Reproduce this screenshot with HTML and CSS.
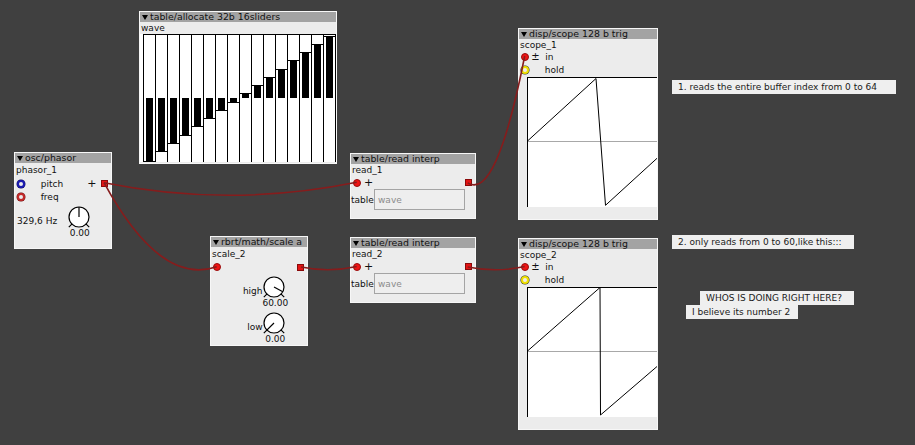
FILE: index.html
```html
<!DOCTYPE html>
<html>
<head>
<meta charset="utf-8">
<link rel="stylesheet" href="styles.css">
</head>
<body>
<div class="canvas">

  <div class="obj o-table">
    <div class="hdr"><span class="tri"></span>table/allocate 32b 16sliders</div>
    <div class="iname h12">wave</div>
    <svg class="sliders" width="196" height="128" viewBox="0 0 196 128">
      <rect x="0" y="0" width="196" height="128" fill="#fff"/>
      <g fill="#000">
        <rect x="6" y="64" width="7" height="63"/>
        <rect x="18" y="64" width="7" height="53"/>
        <rect x="30" y="64" width="7" height="45"/>
        <rect x="42" y="64" width="7" height="37"/>
        <rect x="54" y="64" width="7" height="28"/>
        <rect x="66" y="64" width="7" height="20"/>
        <rect x="78" y="64" width="7" height="12"/>
        <rect x="90" y="64" width="7" height="4"/>
        <rect x="102" y="59" width="7" height="5"/>
        <rect x="114" y="51" width="7" height="13"/>
        <rect x="126" y="43" width="7" height="21"/>
        <rect x="138" y="35" width="7" height="29"/>
        <rect x="150" y="26" width="7" height="38"/>
        <rect x="162" y="18" width="7" height="46"/>
        <rect x="174" y="10" width="7" height="54"/>
        <rect x="186" y="2" width="7" height="62"/>
      </g>
      <path stroke="#000" stroke-width="1" fill="none" d="M3 0.5H196 M3.5 0V128 M15.5 0V128 M27.5 0V128 M39.5 0V128 M51.5 0V128 M63.5 0V128 M75.5 0V128 M87.5 0V128 M99.5 0V128 M111.5 0V128 M123.5 0V128 M135.5 0V128 M147.5 0V128 M159.5 0V128 M171.5 0V128 M183.5 0V128 M195.5 0V128
        M3.5 127.5H15.5 M15.5 117.5H27.5 M27.5 109.5H39.5 M39.5 101.5H51.5 M51.5 92.5H63.5 M63.5 84.5H75.5 M75.5 76.5H87.5 M87.5 68.5H99.5 M99.5 59.5H111.5 M111.5 51.5H123.5 M123.5 43.5H135.5 M135.5 35.5H147.5 M147.5 26.5H159.5 M159.5 18.5H171.5 M171.5 10.5H183.5 M183.5 2.5H195.5"/>
    </svg>
  </div>

  <div class="obj o-phasor">
    <div class="hdr"><span class="tri"></span>osc/phasor</div>
    <div class="iname h14">phasor_1</div>
    <div class="row h13">
      <span class="ring ring-blue"></span><span class="plabel">pitch</span>
      <span class="fill"></span><span class="sign">+</span><span class="outlet"></span>
    </div>
    <div class="row h13">
      <span class="ring ring-red"></span><span class="plabel">freq</span>
    </div>
    <div class="krow kr-phasor">
      <span class="klabel kl-phasor">329,6 Hz</span>
      <div class="knob">
        <svg width="30" height="24" viewBox="0 0 30 24"><circle cx="15" cy="12" r="10" fill="#fff" stroke="#000" stroke-width="1.2"/><path d="M8.3 18.7L4.8 22.2M21.7 18.7L25.2 22.2M15 12V2" stroke="#000" stroke-width="1.2" fill="none"/></svg>
        <span class="kval">0.00</span>
      </div>
    </div>
  </div>

  <div class="obj o-scale">
    <div class="hdr"><span class="tri"></span>rbrt/math/scale a</div>
    <div class="iname h14">scale_2</div>
    <div class="row h12">
      <span class="inlet"></span><span class="fill"></span><span class="outlet"></span>
    </div>
    <div class="krow kr-high">
      <span class="klabel kl-scale">high</span>
      <div class="knob knob-tight">
        <svg width="30" height="24" viewBox="0 0 30 24"><circle cx="15" cy="12" r="10" fill="#fff" stroke="#000" stroke-width="1.2"/><path d="M8.3 18.7L4.8 22.2M21.7 18.7L25.2 22.2M15 12L23.8 16.7" stroke="#000" stroke-width="1.2" fill="none"/></svg>
        <span class="kval">60.00</span>
      </div>
    </div>
    <div class="krow kr-low">
      <span class="klabel kl-scale">low</span>
      <div class="knob knob-tight">
        <svg width="30" height="24" viewBox="0 0 30 24"><circle cx="15" cy="12" r="10" fill="#fff" stroke="#000" stroke-width="1.2"/><path d="M8.3 18.7L4.8 22.2M21.7 18.7L25.2 22.2M15 12L4.8 22.2" stroke="#000" stroke-width="1.2" fill="none"/></svg>
        <span class="kval">0.00</span>
      </div>
    </div>
  </div>

  <div class="obj o-read1">
    <div class="hdr"><span class="tri"></span>table/read interp</div>
    <div class="iname h12">read_1</div>
    <div class="row h13">
      <span class="inlet"></span><span class="sign sign-in">+</span><span class="fill"></span><span class="outlet"></span>
    </div>
    <div class="row trow">
      <span class="tlabel">table</span><span class="field">wave</span>
    </div>
  </div>

  <div class="obj o-read2">
    <div class="hdr"><span class="tri"></span>table/read interp</div>
    <div class="iname h12">read_2</div>
    <div class="row h13">
      <span class="inlet"></span><span class="sign sign-in">+</span><span class="fill"></span><span class="outlet"></span>
    </div>
    <div class="row trow">
      <span class="tlabel">table</span><span class="field">wave</span>
    </div>
  </div>

  <div class="obj o-scope1">
    <div class="hdr"><span class="tri"></span>disp/scope 128 b trig</div>
    <div class="iname h11">scope_1</div>
    <div class="row h13">
      <span class="inlet"></span><span class="sign sign-pm">±</span><span class="ilabel">in</span>
    </div>
    <div class="row h14">
      <span class="ring ring-yellow"></span><span class="hlabel">hold</span>
    </div>
    <svg class="scope" width="130" height="130" viewBox="0 0 130 130">
      <rect width="130" height="130" fill="#fff"/>
      <path d="M0 64.5H130" stroke="#a8a8a8" stroke-width="1"/>
      <path d="M0 0.5H130M0.5 0V130" stroke="#000" stroke-width="1"/>
      <polyline points="0.5,64 69,1.5 78.5,128.3 130,81.3" fill="none" stroke="#000" stroke-width="1"/>
    </svg>
  </div>

  <div class="obj o-scope2">
    <div class="hdr"><span class="tri"></span>disp/scope 128 b trig</div>
    <div class="iname h11">scope_2</div>
    <div class="row h13">
      <span class="inlet"></span><span class="sign sign-pm">±</span><span class="ilabel">in</span>
    </div>
    <div class="row h14">
      <span class="ring ring-yellow"></span><span class="hlabel">hold</span>
    </div>
    <svg class="scope" width="130" height="130" viewBox="0 0 130 130">
      <rect width="130" height="130" fill="#fff"/>
      <path d="M0 64.5H130" stroke="#a8a8a8" stroke-width="1"/>
      <path d="M0 0.5H130M0.5 0V130" stroke="#000" stroke-width="1"/>
      <polyline points="0.5,64 73,0.5 73.5,128 130,79.5" fill="none" stroke="#000" stroke-width="1"/>
    </svg>
  </div>

  <div class="comment c1">1. reads the entire buffer index from 0 to 64</div>
  <div class="comment c2">2. only reads from 0 to 60,like this:::</div>
  <div class="comment c3">WHOS IS DOING RIGHT HERE?</div>
  <div class="comment c4">I believe its number 2</div>

  <svg class="wires" width="915" height="445" viewBox="0 0 915 445">
    <g fill="none" stroke="#861c1c" stroke-width="1.6">
      <path d="M104 182.7 Q230.3 208 356.7 182.3"/>
      <path d="M104 182.7 Q160.3 286.4 216.7 266.7"/>
      <path d="M467.7 182.8 Q496.2 201.2 524.7 56"/>
      <path d="M301 267 Q328.9 272.7 356.7 266.5"/>
      <path d="M467.7 267 Q496.2 272.8 524.7 266.5"/>
    </g>
  </svg>
</div>
</body>
</html>
```
FILE: styles.css
```css
* { box-sizing: border-box; }
html, body { margin: 0; padding: 0; }
body {
  background: #404040;
  width: 915px;
  height: 445px;
  overflow: hidden;
  font-family: "DejaVu Sans", sans-serif;
  font-size: 9px;
  color: #111;
}
.canvas { position: relative; width: 915px; height: 445px; }

.obj {
  position: absolute;
  display: flex;
  flex-direction: column;
  background: #ececec;
  border: 1px solid #f7f7f7;
  white-space: nowrap;
}
.hdr {
  height: 10px;
  flex: none;
  background: #a3a3a3;
  display: flex;
  align-items: center;
  padding-left: 1.5px;
  line-height: 10px;
  font-size: 9.4px;
}
.tri {
  width: 0; height: 0;
  border-left: 3px solid transparent;
  border-right: 3px solid transparent;
  border-top: 5.5px solid #000;
  margin-right: 2.5px;
}
.iname { padding-left: 1px; display: flex; align-items: center; flex: none; }
.h11 { height: 11px; }
.h12 { height: 12px; }
.h13 { height: 13px; }
.h14 { height: 14px; }
.row { display: flex; align-items: center; flex: none; }
.fill { flex: 1; }

/* placement on the free patch canvas */
.o-table  { left: 139px; top: 11px;  width: 198px; height: 153px; }
.o-phasor { left: 14px;  top: 152px; width: 98px;  height: 97px; }
.o-scale  { left: 210px; top: 236px; width: 98px;  height: 110px; }
.o-read1  { left: 350px; top: 153px; width: 126px; height: 66px; }
.o-read2  { left: 350px; top: 237px; width: 126px; height: 66px; }
.o-scope1 { left: 518px; top: 28px;  width: 140px; height: 192px; }
.o-scope2 { left: 518px; top: 238px; width: 140px; height: 192px; }

.sliders { display: block; flex: none; }

/* inlets / outlets */
.inlet {
  width: 8px; height: 8px; border-radius: 50%;
  background: #ee1414; border: 1px solid #9a0c0c;
  margin-left: 1.7px; flex: none;
}
.outlet {
  width: 7px; height: 7px;
  background: #e41414; border: 1px solid #8a0a0a;
  margin-right: 3.5px; margin-left: 4px; flex: none;
}
.ring {
  width: 8px; height: 8px; border-radius: 50%;
  background: #ececec; margin-left: 2.3px; flex: none;
}
.ring-blue { border: 2px solid #1b1bb0; box-shadow: 0 0 0 0.5px #0a0a60; }
.ring-red { border: 2px solid #c42a2a; box-shadow: 0 0 0 0.5px #6a1010; }
.ring-yellow { border: 2px solid #efe000; box-shadow: 0 0 0 0.6px #333; margin-left: 1.7px; }

.plabel { margin-left: 15.4px; }
.sign { font-size: 11px; line-height: 11px; }
.sign-in { margin-left: 3.3px; }
.sign-pm { margin-left: 2.6px; font-size: 10px; }
.ilabel { margin-left: 5.5px; }
.hlabel { margin-left: 16px; }

/* knobs */
.krow { display: flex; align-items: flex-start; flex: none; }
.kr-phasor { padding-left: 2px; margin-top: 2.3px; }
.kr-high { margin-top: 1.7px; }
.kr-low { margin-top: 3px; }
.klabel { line-height: 11px; }
.kl-phasor { width: 46.7px; margin-top: 10.5px; }
.kl-scale { width: 51.5px; text-align: right; margin-top: 11.5px; }
.knob { display: flex; flex-direction: column; align-items: center; width: 30px; }
.knob-tight { margin-left: -3.2px; }
.knob svg { display: block; }
.kval { line-height: 9px; height: 9px; padding-left: 2px; }

/* table/read field */
.trow { height: 21px; }
.tlabel { width: 23px; }
.field {
  width: 90.5px; height: 21px;
  border: 1px solid #a4a4a4;
  background: #eeeeee;
  color: #8c8c8c;
  padding-left: 3px;
  display: flex; align-items: center;
}

/* scope */
.scope { display: block; flex: none; margin-left: 8px; }

/* comments */
.comment {
  position: absolute;
  height: 14px;
  line-height: 14px;
  background: #efefef;
  color: #1a1a1a;
  padding-left: 6px;
  white-space: nowrap;
  overflow: hidden;
}
.c1 { left: 672px; top: 80px;  width: 224px; }
.c2 { left: 672px; top: 235px; width: 182px; }
.c3 { left: 700px; top: 291px; width: 154px; }
.c4 { left: 686px; top: 305px; width: 112px; }

.wires { position: absolute; left: 0; top: 0; pointer-events: none; }
```
